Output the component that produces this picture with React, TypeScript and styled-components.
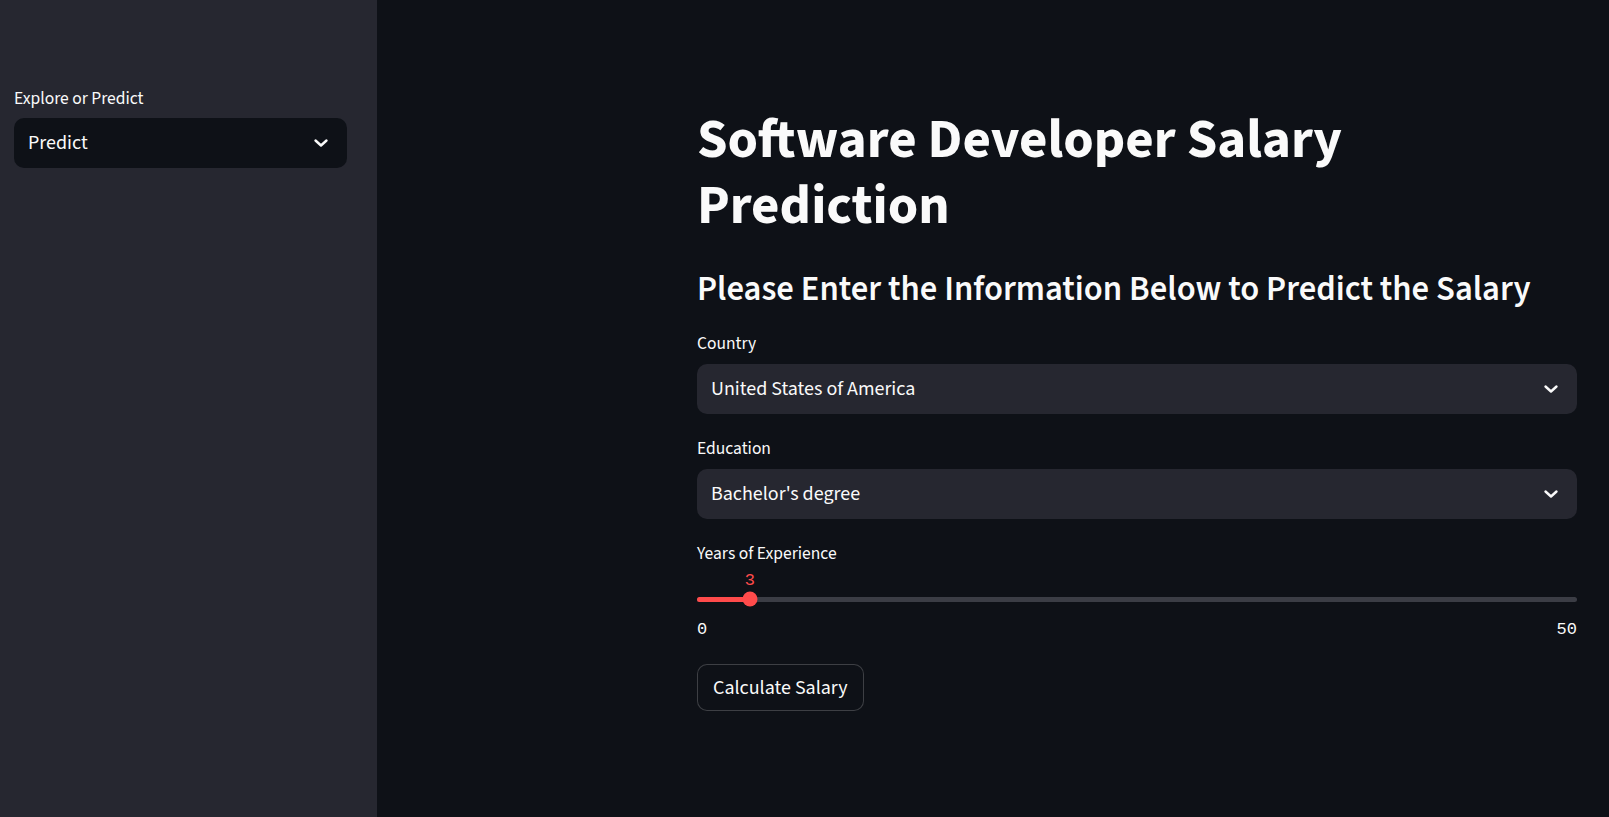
import React from "react";
import styled, { createGlobalStyle } from "styled-components";

const GlobalStyle = createGlobalStyle`
  html, body {
    margin: 0;
    padding: 0;
    background: #0e1117;
  }
  body {
    font-family: "Source Sans Pro", "Source Sans 3", Lato, "Noto Sans", sans-serif;
    color: #fafafa;
  }
  * { box-sizing: border-box; }
`;

const Page = styled.div`
  display: flex;
  width: 100%;
  height: 100vh;
  overflow: hidden;
`;

const Sidebar = styled.aside`
  flex: 0 0 377px;
  background: #262730;
  padding: 87px 30px 0 14px;
  display: flex;
  flex-direction: column;
  gap: 7px;
`;

const Main = styled.main`
  flex: 1;
  background: #0e1117;
  padding: 107px 32px 0 320px;
  display: flex;
  flex-direction: column;
`;

const Title = styled.h1`
  margin: 0;
  font-size: 55px;
  line-height: 66px;
  font-weight: 700;
  color: #fafafa;
`;

const Subheader = styled.h3`
  margin: 30px 0 0;
  font-size: 34.6px;
  line-height: 42px;
  font-weight: 600;
  color: #fafafa;
`;

const Form = styled.div`
  margin-top: 21px;
  display: flex;
  flex-direction: column;
  gap: 23px;
`;

const Field = styled.div`
  display: flex;
  flex-direction: column;
  gap: 8px;
`;

const Label = styled.label`
  font-size: 17.5px;
  line-height: 24px;
  color: #fafafa;
`;

const SelectBox = styled.div<{ $inverted?: boolean }>`
  height: 50px;
  border-radius: 10px;
  background: ${(p) => (p.$inverted ? "#0e1117" : "#262730")};
  display: flex;
  align-items: center;
  justify-content: space-between;
  padding: 0 16px 0 14px;
  font-size: 20px;
  color: #fafafa;
`;

const Chevron = () => (
  <svg width="20" height="20" viewBox="0 0 20 20" fill="none">
    <path d="M4.5 7.5 L10 12.5 L15.5 7.5" stroke="#fafafa" strokeWidth="2.4" strokeLinecap="round" strokeLinejoin="round" />
  </svg>
);

const Select = ({ value, inverted }: { value: string; inverted?: boolean }) => (
  <SelectBox $inverted={inverted}>
    <span>{value}</span>
    <Chevron />
  </SelectBox>
);

const SliderField = styled.div`
  display: flex;
  flex-direction: column;
`;

const TrackRow = styled.div`
  position: relative;
  height: 20px;
  margin-top: 23px;
  display: flex;
  align-items: center;
`;

const Track = styled.div`
  position: relative;
  width: 100%;
  height: 5px;
  border-radius: 3px;
  background: #3b3d45;
`;

const TrackFill = styled.div`
  position: absolute;
  left: 0;
  top: 0;
  bottom: 0;
  border-radius: 3px;
  background: #ff4b4b;
`;

const Thumb = styled.div`
  position: absolute;
  top: 50%;
  width: 15px;
  height: 15px;
  border-radius: 50%;
  background: #ff4b4b;
  transform: translate(-50%, -50%);
`;

const ThumbValue = styled.div`
  position: absolute;
  top: -18px;
  transform: translateX(-50%);
  font-family: "Liberation Mono", "DejaVu Sans Mono", monospace;
  font-size: 17px;
  line-height: 20px;
  color: #ff4b4b;
`;

const Ticks = styled.div`
  margin-top: 10px;
  display: flex;
  justify-content: space-between;
  font-family: "Liberation Mono", "DejaVu Sans Mono", monospace;
  font-size: 17px;
  line-height: 22px;
  color: #fafafa;
`;

const Button = styled.button`
  align-self: flex-start;
  height: 47px;
  padding: 0 15px;
  border-radius: 10px;
  border: 1px solid rgba(250, 250, 250, 0.2);
  background: #0e1117;
  color: #fafafa;
  font-family: inherit;
  font-size: 20px;
  cursor: pointer;
`;

const Slider = ({ label, min, max, value }: { label: string; min: number; max: number; value: number }) => {
  const pct = ((value - min) / (max - min)) * 100;
  return (
    <SliderField>
      <Label>{label}</Label>
      <TrackRow>
        <Track>
          <TrackFill style={{ width: `${pct}%` }} />
          <Thumb style={{ left: `${pct}%` }} />
        </Track>
        <ThumbValue style={{ left: `${pct}%` }}>{value}</ThumbValue>
      </TrackRow>
      <Ticks>
        <span>{min}</span>
        <span>{max}</span>
      </Ticks>
    </SliderField>
  );
};

export default function App() {
  return (
    <>
      <GlobalStyle />
      <Page>
        <Sidebar>
          <Label>Explore or Predict</Label>
          <Select value="Predict" inverted />
        </Sidebar>
        <Main>
          <Title>
            Software Developer Salary
            <br />
            Prediction
          </Title>
          <Subheader>Please Enter the Information Below to Predict the Salary</Subheader>
          <Form>
            <Field>
              <Label>Country</Label>
              <Select value="United States of America" />
            </Field>
            <Field>
              <Label>Education</Label>
              <Select value="Bachelor's degree" />
            </Field>
            <Slider label="Years of Experience" min={0} max={50} value={3} />
            <Button>Calculate Salary</Button>
          </Form>
        </Main>
      </Page>
    </>
  );
}
